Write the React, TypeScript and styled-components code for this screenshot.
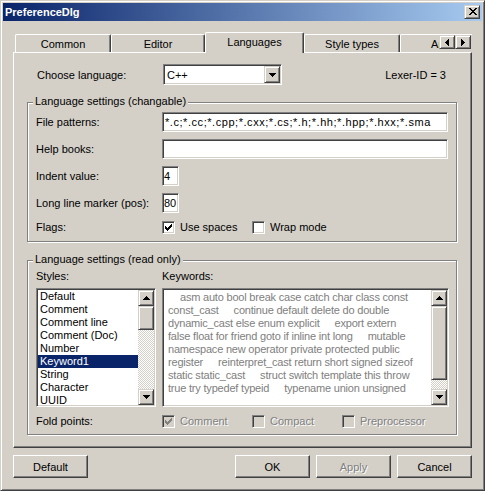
import React from "react";
import styled, { createGlobalStyle, css } from "styled-components";

const FACE = "#D4D0C8";
const SHADOW = "#808080";
const DARK = "#404040";
const HI = "#FFFFFF";
const NAVY = "#0A246A";

const Global = createGlobalStyle`
  html, body { margin: 0; padding: 0; background: ${FACE}; }
  body {
    font-family: "Liberation Sans", Arial, sans-serif;
    font-size: 11px;
    color: #000;
  }
  * { box-sizing: border-box; }
`;

const raisedSoft = css`
  border: 1px solid;
  border-color: ${FACE} ${DARK} ${DARK} ${FACE};
  box-shadow: inset 1px 1px 0 ${HI}, inset -1px -1px 0 ${SHADOW};
  background: ${FACE};
`;

const sunken = css`
  border: 1px solid;
  border-color: ${SHADOW} ${HI} ${HI} ${SHADOW};
  box-shadow: inset 1px 1px 0 ${DARK}, inset -1px -1px 0 ${FACE};
`;

/* ---------- pixel icons ---------- */
const IconSvg = styled.svg`
  display: block;
  flex: none;
`;

const PixelIcon = ({ rows, color = "#000" }: { rows: string[]; color?: string }) => {
  const w = rows[0].length;
  const h = rows.length;
  let d = "";
  rows.forEach((r, y) => {
    let x = 0;
    while (x < w) {
      if (r[x] === "X") {
        const s = x;
        while (x < w && r[x] === "X") x++;
        d += `M${s} ${y}h${x - s}v1h${-(x - s)}z`;
      } else x++;
    }
  });
  return (
    <IconSvg width={w} height={h} viewBox={`0 0 ${w} ${h}`} shapeRendering="crispEdges">
      <path d={d} fill={color} />
    </IconSvg>
  );
};

const CLOSE = [
  "XX....XX",
  ".XX..XX.",
  "..XXXX..",
  "...XX...",
  "..XXXX..",
  ".XX..XX.",
  "XX....XX",
];
const LEFT = ["...X", "..XX", ".XXX", "XXXX", ".XXX", "..XX", "...X"];
const RIGHT = ["X...", "XX..", "XXX.", "XXXX", "XXX.", "XX..", "X..."];
const UP = ["...X...", "..XXX..", ".XXXXX.", "XXXXXXX"];
const DOWN = ["XXXXXXX", ".XXXXX.", "..XXX..", "...X..."];
const CHECK = [
  "......X",
  ".....XX",
  "X...XXX",
  "XX.XXX.",
  "XXXXX..",
  ".XXX...",
  "..X....",
];

/* ---------- window ---------- */
const Window = styled.div`
  width: 485px;
  height: 491px;
  display: flex;
  flex-direction: column;
  padding: 2px;
  border: 1px solid;
  border-color: ${FACE} ${DARK} ${DARK} ${FACE};
  box-shadow: inset 1px 1px 0 ${HI}, inset -1px -1px 0 ${SHADOW};
  background: ${FACE};
`;

const TitleBar = styled.div`
  height: 18px;
  flex: none;
  display: flex;
  align-items: center;
  padding: 0 2px 0 2px;
  background: linear-gradient(to right, ${NAVY}, #A6CAF0);
`;

const TitleText = styled.span`
  color: #fff;
  font-weight: bold;
  font-size: 11px;
  line-height: 13px;
`;

const CaptionButton = styled.div`
  ${raisedSoft};
  margin-left: auto;
  width: 16px;
  height: 14px;
  display: flex;
  align-items: center;
  justify-content: center;
  padding: 0 0 1px 1px;
`;

const Body = styled.div`
  flex: 1;
  display: flex;
  flex-direction: column;
  padding: 11px 10px 10px 10px;
`;

/* ---------- tabs ---------- */
const TabArea = styled.div`
  position: relative;
  height: 21px;
  margin-bottom: -1px;
  z-index: 1;
`;

const TabStrip = styled.div`
  height: 21px;
  display: flex;
  align-items: flex-start;
  padding-left: 2px;
  overflow: hidden;
`;

const Tab = styled.div<{ $w: number; $active?: boolean }>`
  flex: none;
  width: ${(p) => p.$w}px;
  height: ${(p) => (p.$active ? 21 : 18)}px;
  margin-top: ${(p) => (p.$active ? 0 : 2)}px;
  background: ${FACE};
  border-left: 1px solid ${HI};
  border-top: 1px solid ${HI};
  border-right: 1px solid ${DARK};
  border-top-left-radius: 2px;
  border-top-right-radius: 2px;
  box-shadow: inset -1px 0 0 ${SHADOW};
  display: flex;
  justify-content: center;
  align-items: center;
  padding-top: ${(p) => (p.$active ? 0 : 1)}px;
  padding-bottom: ${(p) => (p.$active ? 2 : 0)}px;
  white-space: nowrap;
`;

const TabSpin = styled.div`
  position: absolute;
  left: 426px;
  top: 3px;
  display: flex;
`;

const SpinButton = styled.div`
  ${raisedSoft};
  width: 16px;
  height: 14px;
  display: flex;
  align-items: center;
  justify-content: center;
`;

const Panel = styled.div`
  height: 396px;
  flex: none;
  border-left: 1px solid ${HI};
  border-top: 1px solid ${HI};
  border-right: 1px solid ${DARK};
  border-bottom: 1px solid ${DARK};
  box-shadow: inset -1px -1px 0 ${SHADOW};
  padding: 11px 14px 0 13px;
  display: flex;
  flex-direction: column;
`;

/* ---------- top row ---------- */
const TopRow = styled.div`
  height: 21px;
  display: flex;
  align-items: center;
  padding: 0 11px 0 10px;
`;

const RowLabel = styled.span`
  width: 126px;
  flex: none;
`;

const Combo = styled.div`
  ${sunken};
  width: 119px;
  height: 21px;
  padding: 1px;
  background: #fff;
  display: flex;
  align-items: center;
`;

const ComboText = styled.span`
  flex: 1;
  padding-left: 2px;
`;

const ComboButton = styled.div`
  ${raisedSoft};
  width: 16px;
  height: 17px;
  display: flex;
  align-items: center;
  justify-content: center;
`;

const LexerText = styled.span`
  margin-left: auto;
`;

/* ---------- group boxes ---------- */
const Group = styled.div<{ $h: number; $mt: number }>`
  position: relative;
  flex: none;
  height: ${(p) => p.$h}px;
  margin-top: ${(p) => p.$mt}px;
  border: 1px solid ${SHADOW};
  box-shadow: inset 1px 1px 0 ${HI}, 1px 1px 0 ${HI};
`;

const Legend = styled.span`
  position: absolute;
  left: 5px;
  top: -8px;
  padding: 0 2px;
  line-height: 13px;
  background: ${FACE};
  white-space: nowrap;
`;

const FormGrid = styled.div`
  display: grid;
  grid-template-columns: 126px 286px;
  grid-template-rows: 20px 20px 20px 20px 14px;
  row-gap: 7px;
  align-items: center;
  padding: 9px 0 0 8px;
`;

const FieldLabel = styled.span`
  white-space: nowrap;
`;

const TextInput = styled.input<{ $w?: number; $wide?: boolean }>`
  ${sunken};
  width: ${(p) => (p.$w ? `${p.$w}px` : "100%")};
  height: 20px;
  margin: 0;
  padding: 0 0 0 ${(p) => (p.$w ? 1 : 2)}px;
  background: #fff;
  font: inherit;
  color: #000;
  outline: none;
  letter-spacing: ${(p) => (p.$wide ? "0.55px" : "0")};
`;

const CheckRow = styled.div`
  display: flex;
  align-items: center;
`;

const CheckItem = styled.div<{ $w?: number }>`
  display: flex;
  align-items: center;
  gap: 5px;
  width: ${(p) => (p.$w ? `${p.$w}px` : "auto")};
  flex: none;
`;

const CheckBox = styled.div<{ $disabled?: boolean }>`
  ${sunken};
  width: 13px;
  height: 13px;
  flex: none;
  padding: 2px;
  background: ${(p) => (p.$disabled ? FACE : "#fff")};
`;

const CheckLabel = styled.span<{ $disabled?: boolean }>`
  white-space: nowrap;
  ${(p) =>
    p.$disabled &&
    css`
      color: ${SHADOW};
      text-shadow: 1px 1px 0 ${HI};
    `}
`;

const Check = ({ checked, disabled, label, w }: { checked?: boolean; disabled?: boolean; label: string; w?: number }) => (
  <CheckItem $w={w}>
    <CheckBox $disabled={disabled}>{checked && <PixelIcon rows={CHECK} color={disabled ? SHADOW : "#000"} />}</CheckBox>
    <CheckLabel $disabled={disabled}>{label}</CheckLabel>
  </CheckItem>
);

/* ---------- read-only group ---------- */
const ReadGrid = styled.div`
  display: grid;
  grid-template-columns: 126px 287px;
  grid-template-rows: 13px 119px;
  row-gap: 5px;
  padding: 9px 0 0 8px;
  line-height: 13px;
`;

const FoldRow = styled.div`
  display: grid;
  grid-template-columns: 126px auto;
  align-items: center;
  height: 14px;
  margin-top: 7px;
  padding-left: 8px;
`;

const ListBox = styled.div<{ $w: number }>`
  ${sunken};
  width: ${(p) => p.$w}px;
  height: 119px;
  padding: 1px;
  background: #fff;
  display: flex;
`;

const ListItems = styled.div`
  flex: 1;
  overflow: hidden;
`;

const ListItem = styled.div<{ $sel?: boolean }>`
  height: 13px;
  line-height: 13px;
  padding-left: 2px;
  white-space: nowrap;
  background: ${(p) => (p.$sel ? NAVY : "transparent")};
  color: ${(p) => (p.$sel ? "#fff" : "#000")};
`;

const ScrollBarBox = styled.div`
  width: 16px;
  flex: none;
  display: flex;
  flex-direction: column;
`;

const ScrollButton = styled.div`
  ${raisedSoft};
  width: 16px;
  height: 16px;
  flex: none;
  display: flex;
  align-items: center;
  justify-content: center;
`;

const Thumb = styled.div<{ $h: number }>`
  ${raisedSoft};
  height: ${(p) => p.$h}px;
  flex: none;
`;

const Track = styled.div`
  flex: 1;
  background-color: ${FACE};
  background-image: conic-gradient(${HI} 0 25%, ${FACE} 0 50%, ${HI} 0 75%, ${FACE} 0);
  background-size: 2px 2px;
`;

const ScrollBar = ({ thumb }: { thumb: number }) => (
  <ScrollBarBox>
    <ScrollButton>
      <PixelIcon rows={UP} />
    </ScrollButton>
    <Thumb $h={thumb} />
    <Track />
    <ScrollButton>
      <PixelIcon rows={DOWN} />
    </ScrollButton>
  </ScrollBarBox>
);

const KeywordText = styled.div`
  flex: 1;
  overflow: hidden;
  padding: 1px 0 0 4px;
  color: ${SHADOW};
  letter-spacing: -0.2px;
`;

const KwLine = styled.div`
  height: 13px;
  line-height: 13px;
  white-space: nowrap;
  display: flex;
`;

const Gap = styled.span<{ $w: number }>`
  display: inline-block;
  flex: none;
  width: ${(p) => p.$w}px;
`;

/* ---------- bottom buttons ---------- */
const ButtonRow = styled.div`
  display: flex;
  margin-top: 7px;
  gap: 6px;
`;

const PushButton = styled.div<{ $disabled?: boolean; $push?: boolean }>`
  width: 75px;
  height: 23px;
  flex: none;
  display: flex;
  align-items: center;
  justify-content: center;
  background: ${FACE};
  border: 1px solid;
  border-color: ${HI} ${DARK} ${DARK} ${HI};
  box-shadow: inset -1px -1px 0 ${SHADOW};
  margin-right: ${(p) => (p.$push ? "auto" : "0")};
  ${(p) =>
    p.$disabled &&
    css`
      color: ${SHADOW};
      text-shadow: 1px 1px 0 ${HI};
    `}
`;

/* ---------- data ---------- */
const TABS = [
  { label: "Common", w: 96 },
  { label: "Editor", w: 94 },
  { label: "Languages", w: 99, active: true },
  { label: "Style types", w: 96 },
  { label: "Arrows", w: 96 },
];

const STYLES = [
  "Default",
  "Comment",
  "Comment line",
  "Comment (Doc)",
  "Number",
  "Keyword1",
  "String",
  "Character",
  "UUID",
];

const KEYWORDS: { indent?: number; parts: string[] }[] = [
  { indent: 12, parts: ["asm auto bool break case catch char class const"] },
  { parts: ["const_cast", "continue default delete do double"] },
  { parts: ["dynamic_cast else enum explicit", "export extern"] },
  { parts: ["false float for friend goto if inline int long", "mutable"] },
  { parts: ["namespace new operator private protected public"] },
  { parts: ["register", "reinterpret_cast return short signed sizeof"] },
  { parts: ["static static_cast", "struct switch template this throw"] },
  { parts: ["true try typedef typeid", "typename union unsigned"] },
];

export default function App() {
  return (
    <>
      <Global />
      <Window>
        <TitleBar>
          <TitleText>PreferenceDlg</TitleText>
          <CaptionButton>
            <PixelIcon rows={CLOSE} />
          </CaptionButton>
        </TitleBar>
        <Body>
          <TabArea>
            <TabStrip>
              {TABS.map((t) => (
                <Tab key={t.label} $w={t.w} $active={t.active}>
                  {t.label}
                </Tab>
              ))}
            </TabStrip>
            <TabSpin>
              <SpinButton>
                <PixelIcon rows={LEFT} />
              </SpinButton>
              <SpinButton>
                <PixelIcon rows={RIGHT} />
              </SpinButton>
            </TabSpin>
          </TabArea>
          <Panel>
            <TopRow>
              <RowLabel>Choose language:</RowLabel>
              <Combo>
                <ComboText>C++</ComboText>
                <ComboButton>
                  <PixelIcon rows={DOWN} />
                </ComboButton>
              </Combo>
              <LexerText>Lexer-ID = 3</LexerText>
            </TopRow>

            <Group $h={140} $mt={17}>
              <Legend>Language settings (changable)</Legend>
              <FormGrid>
                <FieldLabel>File patterns:</FieldLabel>
                <TextInput $wide defaultValue="*.c;*.cc;*.cpp;*.cxx;*.cs;*.h;*.hh;*.hpp;*.hxx;*.sma" />
                <FieldLabel>Help books:</FieldLabel>
                <TextInput defaultValue="" />
                <FieldLabel>Indent value:</FieldLabel>
                <TextInput $w={17} defaultValue="4" />
                <FieldLabel>Long line marker (pos):</FieldLabel>
                <TextInput $w={17} defaultValue="80" />
                <FieldLabel>Flags:</FieldLabel>
                <CheckRow>
                  <Check checked label="Use spaces" w={90} />
                  <Check label="Wrap mode" />
                </CheckRow>
              </FormGrid>
            </Group>

            <Group $h={175} $mt={18}>
              <Legend>Language settings (read only)</Legend>
              <ReadGrid>
                <FieldLabel>Styles:</FieldLabel>
                <FieldLabel>Keywords:</FieldLabel>
                <ListBox $w={120}>
                  <ListItems>
                    {STYLES.map((s) => (
                      <ListItem key={s} $sel={s === "Keyword1"}>
                        {s}
                      </ListItem>
                    ))}
                  </ListItems>
                  <ScrollBar thumb={24} />
                </ListBox>
                <ListBox $w={287}>
                  <KeywordText>
                    {KEYWORDS.map((k, i) => (
                      <KwLine key={i}>
                        {k.indent ? <Gap $w={k.indent} /> : null}
                        {k.parts.map((p, j) => (
                          <React.Fragment key={j}>
                            {j > 0 && <Gap $w={15} />}
                            <span>{p}</span>
                          </React.Fragment>
                        ))}
                      </KwLine>
                    ))}
                  </KeywordText>
                  <ScrollBar thumb={74} />
                </ListBox>
              </ReadGrid>
              <FoldRow>
                <FieldLabel>Fold points:</FieldLabel>
                <CheckRow>
                  <Check checked disabled label="Comment" w={90} />
                  <Check disabled label="Compact" w={90} />
                  <Check disabled label="Preprocessor" />
                </CheckRow>
              </FoldRow>
            </Group>
          </Panel>
          <ButtonRow>
            <PushButton $push>Default</PushButton>
            <PushButton>OK</PushButton>
            <PushButton $disabled>Apply</PushButton>
            <PushButton>Cancel</PushButton>
          </ButtonRow>
        </Body>
      </Window>
    </>
  );
}
